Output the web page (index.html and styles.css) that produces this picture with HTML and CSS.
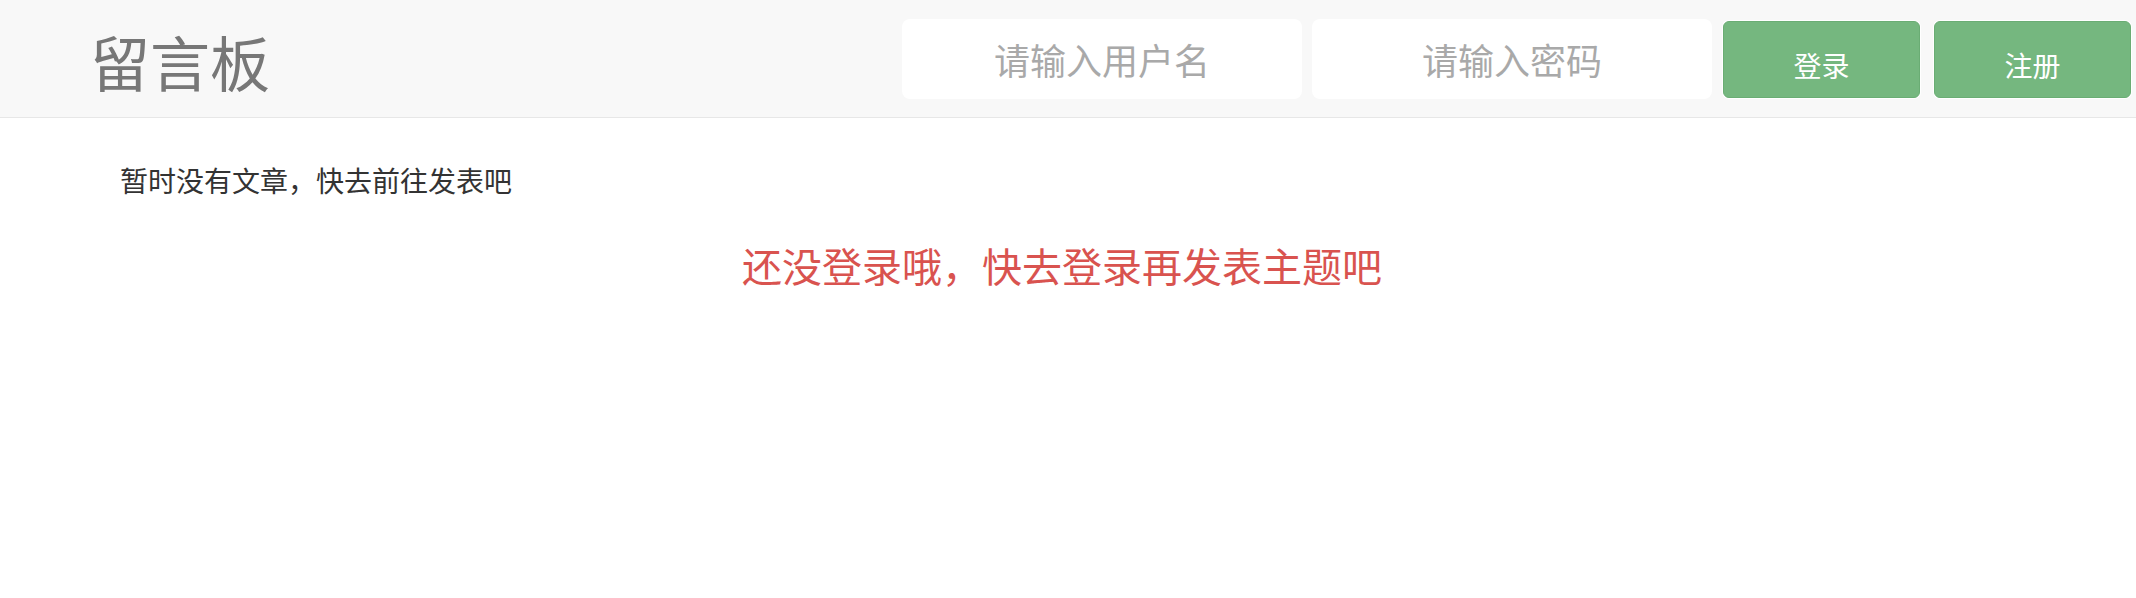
FILE: index.html
```html
<!DOCTYPE html>
<html lang="zh-CN">
<head>
<meta charset="utf-8">
<title>留言板</title>
<link rel="stylesheet" href="styles.css">
</head>
<body>
<header class="navbar">
  <div class="brand">留言板</div>
  <form class="login-form">
    <input class="field" type="text" placeholder="请输入用户名">
    <input class="field" type="password" placeholder="请输入密码">
    <button class="btn" type="button">登录</button>
    <button class="btn btn-register" type="button">注册</button>
  </form>
</header>
<main class="content">
  <p class="empty">暂时没有文章，快去前往发表吧</p>
  <p class="notice">还没登录哦，快去登录再发表主题吧</p>
</main>
</body>
</html>
```

FILE: styles.css
```css
* { box-sizing: border-box; }
html, body { margin: 0; padding: 0; background: #fff; }
body {
  font-family: "Noto Sans CJK SC", "Noto Sans", sans-serif;
  color: #333;
}
.navbar {
  display: flex;
  align-items: center;
  height: 118px;
  background: #f8f8f8;
  border-bottom: 1px solid #e7e7e7;
  padding-right: 5px;
}
.brand {
  margin-left: 90px;
  padding-top: 4px;
  font-size: 60px;
  line-height: 70px;
  color: #777;
}
.login-form {
  margin-left: auto;
  display: flex;
  align-items: center;
}
.field {
  width: 400px;
  height: 80px;
  margin-right: 10px;
  border: none;
  border-radius: 8px;
  background: #fff;
  font-family: inherit;
  font-size: 36px;
  text-align: center;
  color: #555;
  outline: none;
}
.field::placeholder { color: #a9a9a9; }
.field + .field { margin-right: 11px; }
.btn {
  width: 197px;
  height: 77px;
  margin-top: 2px;
  padding: 10px 0 0;
  border: 1px solid #6aad74;
  border-radius: 6px;
  background: #75b77f;
  color: #fff;
  font-family: inherit;
  font-size: 28px;
  line-height: 40px;
  box-shadow: 0 0 0 1px #fff;
}
.btn-register { margin-left: 14px; }
.content {
  padding: 42px 27px 0 120px;
}
.empty {
  margin: 0;
  font-size: 28px;
  line-height: 40px;
  color: #333;
}
.notice {
  margin: 38px 0 0 -105px;
  font-size: 40px;
  line-height: 54px;
  text-align: center;
  color: #d9534f;
}
```
